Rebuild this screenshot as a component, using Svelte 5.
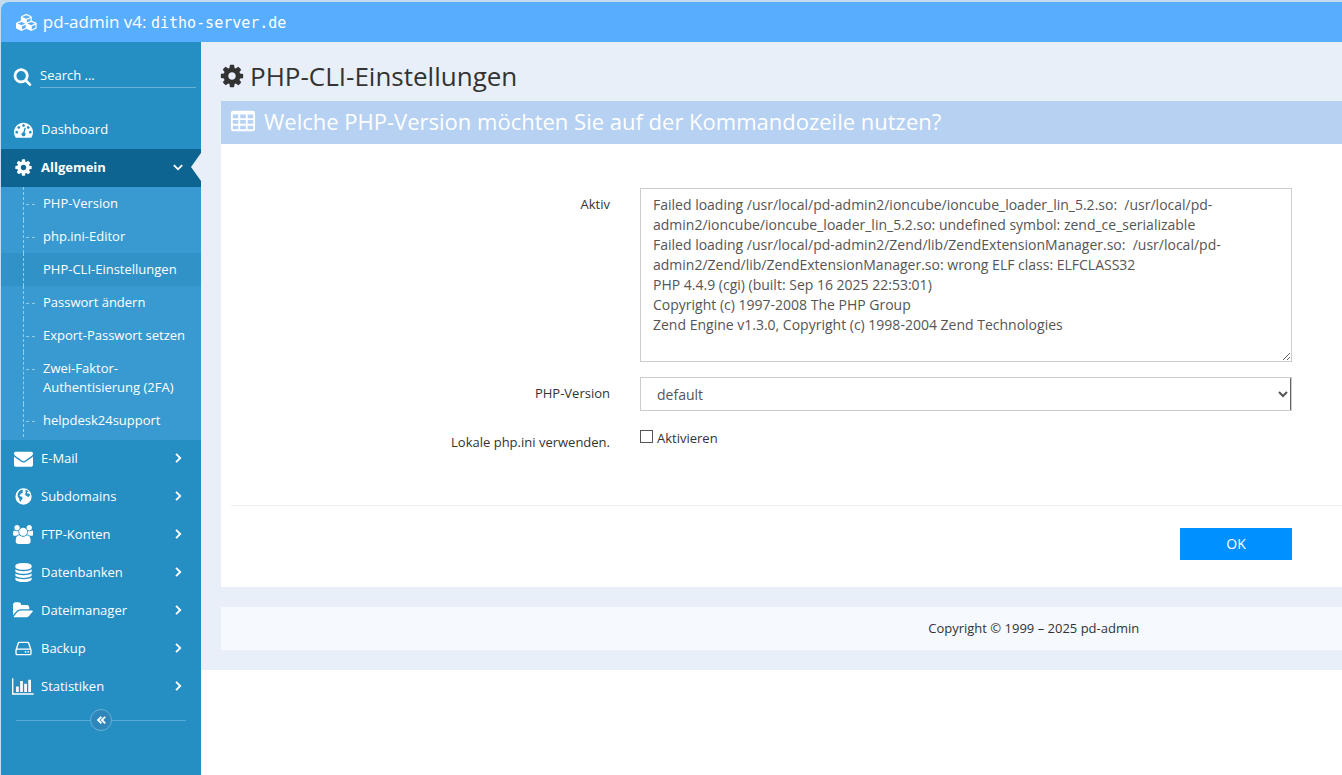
<script>
  // Each icon: [viewBox width, path on a 1792 high grid]
  const icons = {
    cog: [1792, 'M1152 896q0-106-75-181t-181-75-181 75-75 181 75 181 181 75 181-75 75-181zm512-109v222q0 12-8 23t-20 13l-185 28q-19 54-39 91 35 50 107 138 10 12 10 25t-9 23q-27 37-99 108t-94 71q-12 0-26-9l-138-108q-44 23-91 38-16 136-29 186-7 28-36 28h-222q-14 0-24.500-8.500t-11.500-21.500l-28-184q-49-16-90-37l-141 107q-10 9-25 9-14 0-25-11-126-114-165-168-7-10-7-23 0-12 8-23 15-21 51-66.500t54-70.500q-27-50-41-99l-183-27q-13-2-21-12.500t-8-23.500v-222q0-12 8-23t19-13l186-28q14-46 39-92-40-57-107-138-10-12-10-24 0-10 9-23 26-36 98.500-107.500t94.500-71.500q13 0 26 10l138 107q44-23 91-38 16-136 29-186 7-28 36-28h222q14 0 24.500 8.500t11.500 21.500l28 184q49 16 90 37l142-107q9-9 24-9 13 0 25 10 129 119 165 170 7 8 7 22 0 12-8 23-15 21-51 66.500t-54 70.500q26 50 41 98l183 28q13 2 21 12.500t8 23.500z'],
    search: [1792, 'M1216 832q0-185-131.500-316.500t-316.500-131.500-316.500 131.500-131.500 316.500 131.500 316.500 316.500 131.500 316.500-131.500 131.500-316.500zm512 832q0 52-38 90t-90 38q-54 0-90-38l-343-342q-179 124-399 124-143 0-273.500-55.500t-225-150-150-225-55.500-273.500 55.500-273.500 150-225 225-150 273.500-55.500 273.500 55.500 225 150 150 225 55.500 273.500q0 220-124 399l343 343q37 37 37 90z'],
    dashboard: [1792, 'M384 1152q0-53-37.500-90.500t-90.500-37.500-90.500 37.500-37.500 90.500 37.500 90.500 90.500 37.500 90.500-37.500 37.500-90.500zm192-448q0-53-37.500-90.500t-90.500-37.500-90.500 37.500-37.500 90.500 37.500 90.500 90.500 37.500 90.500-37.500 37.500-90.500zm428 481l101-382q6-26-7.500-48.500t-38.500-29.500-48 6.500-30 39.500l-101 382q-60 5-107 43.500t-63 98.500q-20 77 20 146t117 89 146-20 89-117q16-60-6-117t-72-91zm660-33q0-53-37.500-90.500t-90.500-37.500-90.500 37.500-37.500 90.500 37.500 90.500 90.500 37.500 90.500-37.500 37.500-90.500zm-640-640q0-53-37.500-90.500t-90.500-37.500-90.500 37.500-37.500 90.500 37.500 90.500 90.500 37.500 90.500-37.500 37.500-90.500zm448 192q0-53-37.500-90.500t-90.500-37.500-90.500 37.500-37.500 90.500 37.500 90.500 90.500 37.500 90.500-37.500 37.500-90.500zm320 448q0 261-141 483-19 29-54 29h-1402q-35 0-54-29-141-221-141-483 0-182 71-348t191-286 286-191 348-71 348 71 286 191 191 286 71 348z'],
    envelope: [1792, 'M1792 710v794q0 66-47 113t-113 47h-1472q-66 0-113-47t-47-113v-794q44 49 101 87 362 246 497 345 57 42 92.500 65.500t94.500 48 110 24.500h2q51 0 110-24.500t94.500-48 92.500-65.500q170-123 498-345 57-39 100-87zm0-294q0 79-49 151t-122 123q-376 261-468 325-10 7-42.500 30.500t-54 38-52 32.500-57.500 27-50 9h-2q-23 0-50-9t-57.500-27-52-32.500-54-38-42.500-30.500q-91-64-262-182.500t-205-142.500q-62-42-117-115.500t-55-136.500q0-78 41.500-130t118.500-52h1472q65 0 112.500 47t47.500 113z'],
    globe: [1792, 'M896 128a768 768 0 1 0 0 1536a768 768 0 1 0 0-1536zM470 420l130-110 210-60 60 80-90 70 80 60-110 120-120 50-20 90-100 60 50 90 150 20 110 120-40 140-110 90-40 170-110-130-20-180-110-130-60-180 40-200zM1060 260l200 70 130 130-130 0-60 90 110 80 120-40 80 170-100 150-110 30-60-100-150-40-50-130 90-120-90-90 80-70z'],
    users: [1920, 'M593 896q-162 5-265 128h-134q-82 0-138-40.500t-56-118.500q0-353 124-353 6 0 43.500 21t97.500 42.500 119 21.500q67 0 133-23-5 37-5 66 0 139 81 256zm1071 637q0 120-73 189.500t-194 69.500h-874q-121 0-194-69.500t-73-189.500q0-53 3.500-103.500t14-109 26.500-108.500 43-97.500 62-81 85.500-53.500 111.500-20q10 0 43 21.500t73 48 107 48 135 21.500 135-21.500 107-48 73-48 43-21.500q61 0 111.500 20t85.500 53.500 62 81 43 97.500 26.500 108.500 14 109 3.500 103.500zm-1024-1277q0 106-75 181t-181 75-181-75-75-181 75-181 181-75 181 75 75 181zm704 384q0 159-112.500 271.500t-271.500 112.500-271.500-112.500-112.500-271.500 112.500-271.500 271.500-112.500 271.500 112.500 112.500 271.500zm576 225q0 78-56 118.500t-138 40.500h-134q-103-123-265-128 81-117 81-256 0-29-5-66 66 23 133 23 59 0 119-21.500t97.500-42.500 43.500-21q124 0 124 353zm-128-609q0 106-75 181t-181 75-181-75-75-181 75-181 181-75 181 75 75 181z'],
    database: [1792, 'M896 768q237 0 443-43t325-127v170q0 69-103 128t-280 93.500-385 34.500-385-34.500-280-93.500-103-128v-170q119 84 325 127t443 43zm0 768q237 0 443-43t325-127v170q0 69-103 128t-280 93.500-385 34.500-385-34.500-280-93.500-103-128v-170q119 84 325 127t443 43zm0-384q237 0 443-43t325-127v170q0 69-103 128t-280 93.500-385 34.500-385-34.500-280-93.500-103-128v-170q119 84 325 127t443 43zm0-1152q208 0 385 34.500t280 93.500 103 128v128q0 69-103 128t-280 93.500-385 34.500-385-34.500-280-93.500-103-128v-128q0-69 103-128t280-93.500 385-34.500z'],
    folder: [1920, 'M1879 952q0 31-31 66l-336 396q-43 51-120.500 86.500t-143.500 35.500h-1088q-34 0-60.500-13t-26.500-43q0-31 31-66l336-396q43-51 120.500-86.500t143.500-35.500h1088q34 0 60.500 13t26.500 43zm-343-344v160h-832q-94 0-197 47.500t-164 119.500l-337 396-5 6q0-4-.5-12.500t-.5-12.500v-960q0-92 66-158t158-66h320q92 0 158 66t66 158v32h544q92 0 158 66t66 158z'],
    hdd: [1792, 'M1168 1216q0 33-23.500 56.500t-56.500 23.500-56.500-23.500-23.500-56.500 23.500-56.500 56.500-23.500 56.500 23.500 23.500 56.500zm256 0q0 33-23.500 56.500t-56.500 23.500-56.500-23.500-23.500-56.500 23.500-56.500 56.500-23.500 56.500 23.500 23.500 56.500zm112 160v-320q0-13-9.500-22.500t-22.500-9.500h-1216q-13 0-22.500 9.500t-9.500 22.500v320q0 13 9.500 22.500t22.500 9.500h1216q13 0 22.500-9.500t9.500-22.500zm-1230-480h1180l-157-482q-4-13-16-21.500t-26-8.500h-782q-14 0-26 8.500t-16 21.500zm1358 160v320q0 66-47 113t-113 47h-1216q-66 0-113-47t-47-113v-320q0-25 16-75l197-606q17-53 63-86t101-33h782q55 0 101 33t63 86l197 606q16 50 16 75z'],
    chart: [2048, 'M640 896v512h-256v-512h256zm384-512v1024h-256v-1024h256zm1024 1152v128h-2048v-1536h128v1408h1920zm-640-896v768h-256v-768h256zm384-384v1152h-256v-1152h256z'],
    cubes: [2304, 'M640 1632l384-192v-314l-384 164v342zm-64-454l404-173-404-173-404 173zm1088 454l384-192v-314l-384 164v342zm-64-454l404-173-404-173-404 173zm-448-293l384-165v-266l-384 164v267zm-64-379l441-189-441-189-441 189zm1088 518v416q0 36-19 67t-52 47l-448 224q-25 14-57 14t-57-14l-448-224q-4-2-7-4-2 2-7 4l-448 224q-25 14-57 14t-57-14l-448-224q-33-16-52-47t-19-67v-416q0-38 21.500-70t56.500-48l434-186v-400q0-38 21.500-70t56.500-48l448-192q23-10 50-10t50 10l448 192q35 16 56.500 48t21.500 70v400l434 186q36 16 57 48t21 70z'],
    table: [1792, 'M224 192h1344q160 0 160 160v1088q0 160-160 160H224q-160 0-160-160V352q0-160 160-160zM192 448v256h384V448zM704 448v256h384V448zM1216 448v256h384V448zM192 832v256h384V832zM704 832v256h384V832zM1216 832v256h384V832zM192 1216v256h384v-256zM704 1216v256h384v-256zM1216 1216v256h384v-256z'],
    right: [1792, 'M560 448l170-170 620 618-620 618-170-170 448-448z'],
    down: [1792, 'M448 560l-170 170 618 620 618-620-170-170-448 448z'],
    collapse: [1792, 'M860 400l170 150-330 346 330 346-170 150-510-496zM1350 400l170 150-330 346 330 346-170 150-510-496z']
  };

  const pages = [
    'PHP-Version',
    'php.ini-Editor',
    'PHP-CLI-Einstellungen',
    'Passwort ändern',
    'Export-Passwort setzen',
    'Zwei-Faktor-Authentisierung (2FA)',
    'helpdesk24support'
  ];

  const menu = [
    { label: 'Dashboard', icon: 'dashboard' },
    { label: 'Allgemein', icon: 'cog', children: pages },
    { label: 'E-Mail', icon: 'envelope', more: true },
    { label: 'Subdomains', icon: 'globe', more: true },
    { label: 'FTP-Konten', icon: 'users', more: true },
    { label: 'Datenbanken', icon: 'database', more: true },
    { label: 'Dateimanager', icon: 'folder', more: true },
    { label: 'Backup', icon: 'hdd', more: true },
    { label: 'Statistiken', icon: 'chart', more: true }
  ];

  const output = [
    'Failed loading /usr/local/pd-admin2/ioncube/ioncube_loader_lin_5.2.so:  /usr/local/pd-admin2/ioncube/ioncube_loader_lin_5.2.so: undefined symbol: zend_ce_serializable',
    'Failed loading /usr/local/pd-admin2/Zend/lib/ZendExtensionManager.so:  /usr/local/pd-admin2/Zend/lib/ZendExtensionManager.so: wrong ELF class: ELFCLASS32',
    'PHP 4.4.9 (cgi) (built: Sep 16 2025 22:53:01)',
    'Copyright (c) 1997-2008 The PHP Group',
    'Zend Engine v1.3.0, Copyright (c) 1998-2004 Zend Technologies'
  ].join('\n');

  let open = $state(true);
  let current = $state('PHP-CLI-Einstellungen');
  let localIni = $state(false);
</script>

{#snippet icon(name, size)}
  <svg class="icon {size}" viewBox="0 0 {icons[name][0]} 1792" aria-hidden="true">
    <path fill-rule="evenodd" d={icons[name][1]} />
  </svg>
{/snippet}

<div class="page">
  <header class="navbar">
    <a class="brand" href="#start">
      {@render icon('cubes', 'md')}
      <span>pd-admin v4: <code>ditho-server.de</code></span>
    </a>
  </header>

  <div class="shell">
    <aside class="sidebar">
      <form class="search">
        <label for="search">{@render icon('search', 'md')}</label>
        <input id="search" type="text" placeholder="Search ..." aria-label="Search" />
      </form>

      <nav>
        <ul class="menu">
          {#each menu as item (item.label)}
            <li>
              <a
                class="entry"
                class:active={item.children}
                href="#{item.icon}"
                onclick={() => { if (item.children) open = !open; }}
              >
                <span class="slot">{@render icon(item.icon, 'md')}</span>
                <span class="text">{item.label}</span>
                {#if item.children}
                  {@render icon('down', 'sm')}
                {:else if item.more}
                  {@render icon('right', 'sm')}
                {/if}
              </a>

              {#if item.children && open}
                <ul class="submenu">
                  {#each item.children as child (child)}
                    <li class:current={child === current}>
                      <a href="#{child}" onclick={() => (current = child)}>{child}</a>
                    </li>
                  {/each}
                </ul>
              {/if}
            </li>
          {/each}
        </ul>
      </nav>

      <div class="collapse">
        <button type="button" aria-label="Menü einklappen">{@render icon('collapse', 'sm')}</button>
      </div>
    </aside>

    <div class="main">
      <div class="content">
        <h1>{@render icon('cog', 'lg')} PHP-CLI-Einstellungen</h1>

        <section class="panel">
          <h2>{@render icon('table', 'lg')} Welche PHP-Version möchten Sie auf der Kommandozeile nutzen?</h2>

          <form class="form">
            <div class="row">
              <label for="active">Aktiv</label>
              <textarea id="active" readonly value={output}></textarea>
            </div>
            <div class="row">
              <label for="version">PHP-Version</label>
              <select id="version">
                <option>default</option>
              </select>
            </div>
            <div class="row">
              <span class="caption">Lokale php.ini verwenden.</span>
              <label class="check">
                <input type="checkbox" bind:checked={localIni} />
                Aktivieren
              </label>
            </div>

            <div class="actions">
              <button type="button">OK</button>
            </div>
          </form>
        </section>

        <footer>Copyright © 1999 – 2025 pd-admin</footer>
      </div>
    </div>
  </div>
</div>

<style>
  :global(body) {
    font: 13px/20px 'Open Sans', 'Noto Sans', sans-serif;
    color: #333;
  }

  .page {
    display: flex;
    flex-direction: column;
    box-sizing: border-box;
    min-height: 100vh;
    padding: 2px 0 0 1px;
    background: #c3dcee;
  }

  .icon {
    display: block;
    flex: none;
    width: auto;
    fill: currentColor;
  }

  .icon.sm { height: 14px; }
  .icon.md { height: 19px; }
  .icon.lg { height: 26px; }

  a {
    color: inherit;
    text-decoration: none;
  }

  /* ── Top bar ── */
  .navbar {
    display: flex;
    height: 40px;
    padding-left: 15px;
    background: #58aefe;
    border-radius: 8px 0 0 0;
    color: #fff;
  }

  .brand {
    display: flex;
    align-items: center;
    gap: 5px;
    font-size: 17px;
  }

  .brand .icon { height: 17px; }

  code {
    font-family: 'DejaVu Sans Mono', 'Liberation Mono', monospace;
    font-size: 15px;
  }

  .shell {
    flex: 1;
    display: flex;
  }

  /* ── Sidebar ── */
  .sidebar {
    flex: none;
    width: 200px;
    background: #258ec3;
    color: #fff;
  }

  .search {
    display: flex;
    align-items: center;
    gap: 8px;
    padding: 22px 5px 23px 12px;
  }

  .search input {
    flex: 1;
    min-width: 0;
    box-sizing: border-box;
    height: 24px;
    padding: 0 0 2px;
    border: 0;
    border-bottom: 1px solid #67b1d7;
    background: transparent;
    color: #fff;
    font: inherit;
  }

  .search input::placeholder {
    color: #fff;
    opacity: 1;
  }

  ul {
    margin: 0;
    padding: 0;
    list-style: none;
  }

  .entry {
    position: relative;
    display: flex;
    align-items: center;
    height: 36px;
    padding: 0 16px 2px 10px;
  }

  .entry.active {
    background: #0e6491;
    font-weight: 700;
  }

  /* notch that points from the content into the open entry */
  .entry.active::after {
    content: '';
    position: absolute;
    top: 4px;
    right: 0;
    width: 10px;
    height: 28px;
    background: #e9eff9;
    clip-path: polygon(0 50%, 100% 0, 100% 100%);
  }

  .slot {
    display: flex;
    justify-content: center;
    width: 24px;
    margin-right: 6px;
  }

  .text { flex: 1; }

  .submenu {
    padding: 0 0 3px;
    background: #389ad0;
  }

  .submenu li {
    position: relative;
    padding: 7px 8px 7px 42px;
    line-height: 19px;
  }

  .submenu li::before {
    content: '';
    position: absolute;
    top: 0;
    bottom: 0;
    left: 22px;
    border-left: 1px dashed #8fcdee;
  }

  .submenu li:not(.current)::after {
    content: '';
    position: absolute;
    top: 17px;
    left: 25px;
    width: 9px;
    border-top: 1px dashed #8fcdee;
  }

  .submenu a { display: block; }

  .submenu .current { background: #3192c8; }

  .collapse {
    display: flex;
    align-items: center;
    padding: 3px 15px;
  }

  .collapse::before,
  .collapse::after {
    content: '';
    flex: 1;
    border-top: 1px solid #57aad4;
  }

  .collapse button {
    display: flex;
    align-items: center;
    justify-content: center;
    box-sizing: border-box;
    width: 22px;
    height: 22px;
    padding: 0;
    border: 1px solid #67b1d7;
    border-radius: 50%;
    background: #2f86bb;
    color: #fff;
  }

  /* ── Content ── */
  .main {
    flex: 1;
    min-width: 0;
    background: #fff;
  }

  .content {
    padding: 0 0 20px 20px;
    background: #e9eff9;
  }

  h1,
  h2 {
    display: flex;
    align-items: center;
    box-sizing: border-box;
    margin: 0;
    font-weight: 400;
  }

  h1 {
    gap: 5px;
    height: 59px;
    margin-left: -2px;
    padding-top: 8px;
    font-size: 26px;
  }

  .panel { background: #fff; }

  h2 {
    gap: 8px;
    height: 43px;
    padding: 0 0 3px 9px;
    background: #b6d1f2;
    color: #fff;
    font-size: 22px;
  }

  h2 .icon { height: 23px; }

  .form {
    padding: 44px 0 27px 10px;
  }

  .row {
    display: grid;
    grid-template-columns: 379fr 652fr;
    gap: 30px;
    align-items: start;
    padding-right: 50px;
    margin-bottom: 15px;
  }

  .row > label,
  .caption {
    padding-top: 6px;
    text-align: right;
  }

  textarea,
  select {
    box-sizing: border-box;
    width: 100%;
    border: 1px solid #ccc;
    border-radius: 0;
    background: #fff;
    color: #555;
    font: 14px/20px 'Open Sans', 'Noto Sans', sans-serif;
  }

  textarea {
    display: block;
    height: 174px;
    padding: 6px 12px;
    resize: both;
  }

  select {
    height: 34px;
    padding: 6px 0 6px 12px;
    box-shadow: inset -1px 0 #666;
  }

  .row > .check {
    display: flex;
    align-items: center;
    gap: 4px;
    padding-top: 2px;
    text-align: left;
  }

  .check input {
    appearance: none;
    box-sizing: border-box;
    width: 13px;
    height: 13px;
    margin: 0 0 3px;
    border: 1px solid #555;
    background: #fff;
  }

  .check input:checked {
    background: #0090ff;
    box-shadow: inset 0 0 0 2px #fff;
  }

  .actions {
    display: flex;
    justify-content: flex-end;
    margin-top: 53px;
    padding: 22px 50px 0 0;
    border-top: 1px solid #eee;
  }

  .actions button {
    width: 112px;
    height: 32px;
    border: 0;
    background: #0090ff;
    color: #fff;
    font: 14px/20px 'Open Sans', 'Noto Sans', sans-serif;
  }

  footer {
    box-sizing: border-box;
    height: 43px;
    margin-top: 20px;
    padding: 11px 0 12px 45%;
    background: #f6f9fe;
    text-align: center;
  }
</style>
